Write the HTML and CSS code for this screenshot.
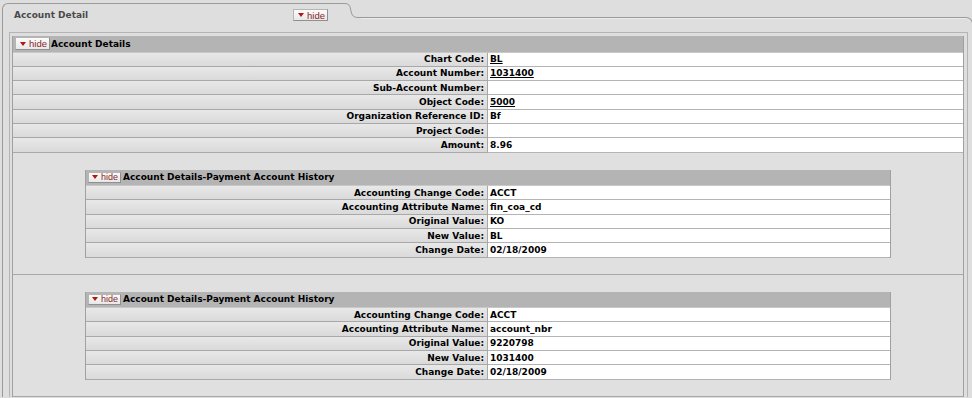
FILE: index.html
```html
<!DOCTYPE html>
<html>
<head>
<meta charset="utf-8">
<link rel="stylesheet" href="styles.css">
</head>
<body>
<div class="page">
  <div class="tabs">
    <div class="tab">
      <span class="tab-title">Account Detail</span>
      <span class="hide"><span class="tri"></span>hide</span>
    </div>
    <svg class="tab-curve" width="20" height="15" viewBox="0 0 20 15"><path d="M0 0.5 H4 Q9 0.5 9.5 6 L10.5 10 Q11.5 14.5 17 14.5 H20" fill="none" stroke="#9a9a9a" stroke-width="1"/></svg>
    <div class="tab-rest"></div>
  </div>
  <div class="panel">
    <div class="inner">
      <div class="dtable">
        <div class="hdr"><span class="hide hide-hdr"><span class="tri"></span>hide</span><span class="hdr-title">Account Details</span></div>
        <div class="row"><div class="lbl">Chart Code:</div><div class="val"><a class="lnk">BL</a></div></div>
        <div class="row"><div class="lbl">Account Number:</div><div class="val"><a class="lnk">1031400</a></div></div>
        <div class="row"><div class="lbl">Sub-Account Number:</div><div class="val"></div></div>
        <div class="row"><div class="lbl">Object Code:</div><div class="val"><a class="lnk">5000</a></div></div>
        <div class="row"><div class="lbl">Organization Reference ID:</div><div class="val">Bf</div></div>
        <div class="row"><div class="lbl">Project Code:</div><div class="val"></div></div>
        <div class="row"><div class="lbl">Amount:</div><div class="val">8.96</div></div>

        <div class="section">
          <div class="dtable nested">
            <div class="hdr"><span class="hide hide-sm"><span class="tri"></span>hide</span><span class="hdr-title nested-title">Account Details-Payment Account History</span></div>
            <div class="row"><div class="lbl">Accounting Change Code:</div><div class="val">ACCT</div></div>
            <div class="row"><div class="lbl">Accounting Attribute Name:</div><div class="val">fin_coa_cd</div></div>
            <div class="row"><div class="lbl">Original Value:</div><div class="val">KO</div></div>
            <div class="row"><div class="lbl">New Value:</div><div class="val">BL</div></div>
            <div class="row"><div class="lbl">Change Date:</div><div class="val">02/18/2009</div></div>
          </div>
        </div>

        <div class="section">
          <div class="dtable nested">
            <div class="hdr"><span class="hide hide-sm"><span class="tri"></span>hide</span><span class="hdr-title nested-title">Account Details-Payment Account History</span></div>
            <div class="row"><div class="lbl">Accounting Change Code:</div><div class="val">ACCT</div></div>
            <div class="row"><div class="lbl">Accounting Attribute Name:</div><div class="val">account_nbr</div></div>
            <div class="row"><div class="lbl">Original Value:</div><div class="val">9220798</div></div>
            <div class="row"><div class="lbl">New Value:</div><div class="val">1031400</div></div>
            <div class="row"><div class="lbl">Change Date:</div><div class="val">02/18/2009</div></div>
          </div>
        </div>
      </div>
    </div>
  </div>
</div>
</body>
</html>
```
FILE: styles.css
```css
* { box-sizing: border-box; }
html, body {
  margin: 0;
  background: #dedede;
  overflow: hidden;
}
body {
  font-family: "DejaVu Sans", Verdana, sans-serif;
  font-size: 9px;
  font-weight: bold;
  color: #000;
}
.page {
  width: 973px;
  padding: 3px 0 0 2px;
}
.tabs {
  display: flex;
  height: 24px;
}
.tab {
  width: 339px;
  flex: none;
  border-top: 1px solid #9a9a9a;
  border-left: 1px solid #9a9a9a;
  border-top-left-radius: 6px;
  display: flex;
  align-items: center;
  padding-left: 11px;
  padding-bottom: 1px;
}
.tab-title {
  width: 279px;
  color: #4a4a4a;
}
.tab-curve {
  flex: none;
  display: block;
}
.tab-rest {
  flex: 1;
  margin-top: 14px;
  height: 10px;
  border-top: 1px solid #9a9a9a;
  border-right: 1px solid #9a9a9a;
  border-top-right-radius: 7px;
  box-shadow: inset 0 1px 0 #ececec;
}
.hide {
  display: inline-flex;
  align-items: center;
  width: 35px;
  height: 12px;
  padding-left: 4px;
  border: 1px solid #b5b5b5;
  border-right-color: #8f8f8f;
  border-bottom-color: #8f8f8f;
  background: linear-gradient(#fbfbfb, #e8e8e8);
  font-family: "Liberation Sans", Arial, sans-serif;
  font-weight: normal;
  font-size: 9.5px;
  color: #8a1f1f;
  flex: none;
}
.hide-hdr { height: 13px; }
.hide-sm { width: 33px; height: 11px; padding-left: 3px; font-size: 9px; }
.tri {
  width: 0;
  height: 0;
  border-left: 3px solid transparent;
  border-right: 3px solid transparent;
  border-top: 4px solid #b01818;
  margin-right: 3px;
}
.panel {
  border-left: 1px solid #9a9a9a;
  border-right: 1px solid #9a9a9a;
  padding: 5px 4px 0 6px;
}
.inner {
  border: 1px solid #b4b4b4;
  border-bottom: none;
  padding: 3px 3px 0 2px;
}
.dtable {
  border-left: 1px solid #a0a0a0;
  border-right: 1px solid #a0a0a0;
}
.nested {
  width: 806px;
  margin: 0 auto;
}
.hdr {
  height: 16.5px;
  background: #b4b4b4;
  display: flex;
  align-items: center;
  padding-left: 2px;
  border-bottom: 1px solid #c8c8c8;
}
.hdr-title {
  margin-left: 1px;
  font-size: 9px;
}
.nested-title { margin-left: 2px; }
.row {
  display: grid;
  grid-template-columns: 1fr 1fr;
  height: 14.3px;
}
.lbl {
  background: linear-gradient(#e8e8e8, #dadada);
  border-right: 1px solid #a8a8a8;
  border-bottom: 1px solid #a8a8a8;
  display: flex;
  align-items: center;
  justify-content: flex-end;
  padding-right: 3px;
  white-space: nowrap;
}
.val {
  background: #fff;
  border-bottom: 1px solid #b4b4b4;
  display: flex;
  align-items: center;
  padding-left: 2px;
  white-space: nowrap;
}
.lnk {
  color: #000;
  text-decoration: underline;
}
.section {
  background: #e0e0e0;
  padding: 17px 0 16px;
  border-bottom: 1px solid #a8a8a8;
}
```
